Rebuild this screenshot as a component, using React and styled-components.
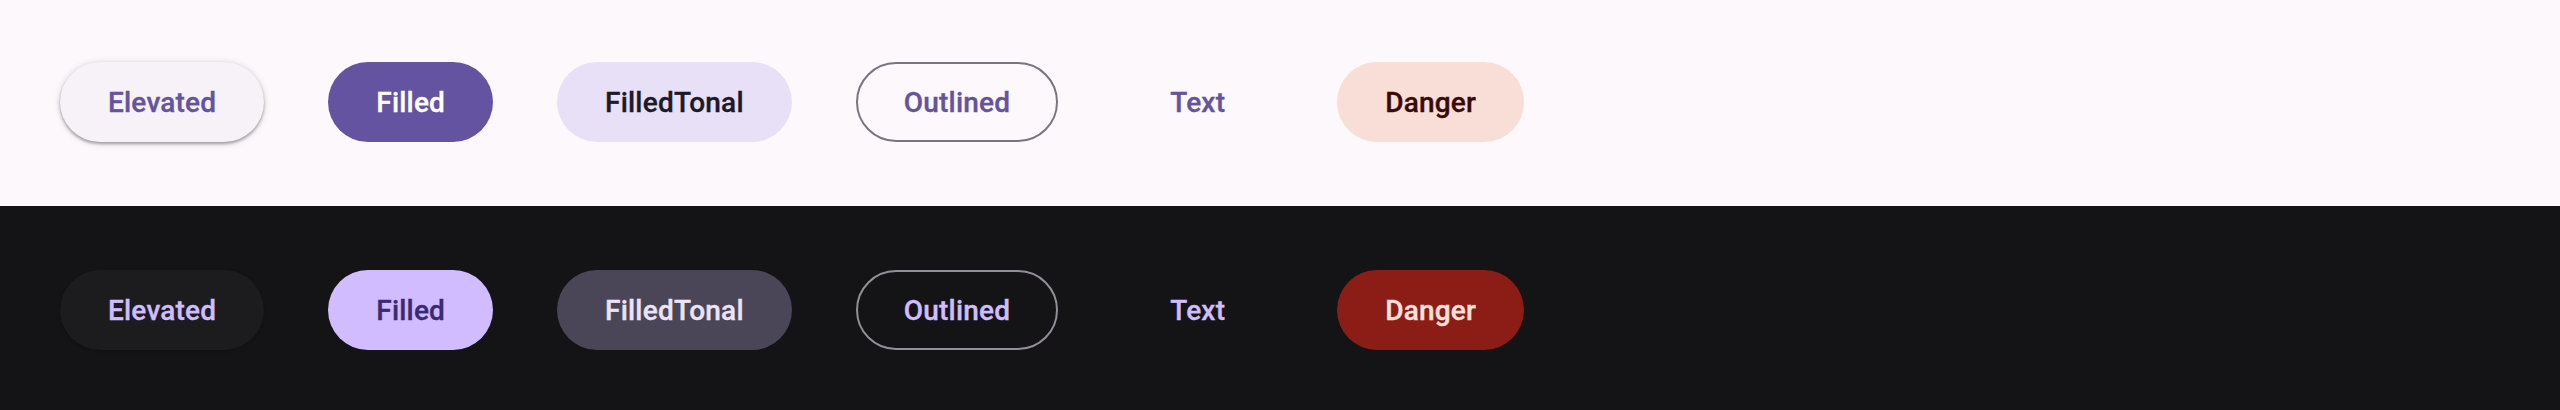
import React from "react";
import styled, { createGlobalStyle, css } from "styled-components";

const GlobalStyle = createGlobalStyle`
  html, body {
    margin: 0;
    padding: 0;
    background: #141316;
  }
  body {
    font-family: Roboto, "Noto Sans", sans-serif;
  }
`;

const themes = {
  light: {
    bg: "#fcf8fc",
    elevatedBg: "#f7f2f7",
    elevatedShadow: "0 2px 3px rgba(0, 0, 0, 0.3), 0 1px 6px 1px rgba(0, 0, 0, 0.12)",
    primary: "#6353a1",
    onPrimary: "#ffffff",
    tonal: "#e8e0f7",
    onTonal: "#1d1a28",
    outline: "#79747e",
    danger: "#f9ddd7",
    onDanger: "#3a0a08",
  },
  dark: {
    bg: "#141416",
    elevatedBg: "#1c1c1e",
    elevatedShadow: "0 1px 3px rgba(0, 0, 0, 0.25)",
    primary: "#d0bcff",
    onPrimary: "#3a2a75",
    tonal: "#4a4557",
    onTonal: "#ece3fb",
    outline: "#938f99",
    danger: "#8c1d16",
    onDanger: "#fbe0dc",
  },
};

const Section = styled.section`
  box-sizing: border-box;
  height: ${(p) => p.$height}px;
  padding: ${(p) => p.$top}px 60px 0;
  background: ${(p) => p.$t.bg};
  display: flex;
  align-items: flex-start;
  gap: 64px;
`;

const variants = {
  elevated: css`
    background: ${(p) => p.$t.elevatedBg};
    color: ${(p) => p.$t.primary};
    box-shadow: ${(p) => p.$t.elevatedShadow};
  `,
  filled: css`
    background: ${(p) => p.$t.primary};
    color: ${(p) => p.$t.onPrimary};
  `,
  tonal: css`
    background: ${(p) => p.$t.tonal};
    color: ${(p) => p.$t.onTonal};
  `,
  outlined: css`
    padding: 0 46px;
    background: transparent;
    color: ${(p) => p.$t.primary};
    border: 2px solid ${(p) => p.$t.outline};
  `,
  text: css`
    background: transparent;
    color: ${(p) => p.$t.primary};
  `,
  danger: css`
    background: ${(p) => p.$t.danger};
    color: ${(p) => p.$t.onDanger};
  `,
};

const Button = styled.button`
  box-sizing: border-box;
  height: 80px;
  padding: 0 48px;
  border: none;
  border-radius: 40px;
  font-family: Roboto, "Noto Sans", sans-serif;
  font-size: 28px;
  font-weight: 500;
  letter-spacing: 0.2px;
  -webkit-text-stroke: 0.35px currentColor;
  display: inline-flex;
  align-items: center;
  justify-content: center;
  cursor: pointer;
  ${(p) => variants[p.$variant]}
`;

const buttons = [
  ["elevated", "Elevated"],
  ["filled", "Filled"],
  ["tonal", "FilledTonal"],
  ["outlined", "Outlined"],
  ["text", "Text"],
  ["danger", "Danger"],
];

const Row = ({ mode, height, top }) => {
  const t = themes[mode];
  return (
    <Section $t={t} $height={height} $top={top}>
      {buttons.map(([variant, label]) => (
        <Button key={variant} type="button" $t={t} $variant={variant}>
          {label}
        </Button>
      ))}
    </Section>
  );
};

export default function App() {
  return (
    <>
      <GlobalStyle />
      <Row mode="light" height={206} top={62} />
      <Row mode="dark" height={204} top={64} />
    </>
  );
}
